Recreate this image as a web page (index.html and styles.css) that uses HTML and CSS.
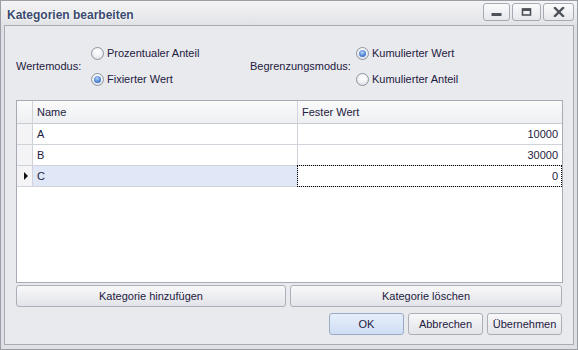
FILE: index.html
```html
<!DOCTYPE html>
<html lang="de">
<head>
<meta charset="utf-8">
<title>Kategorien bearbeiten</title>
<link rel="stylesheet" href="styles.css">
</head>
<body>
<div class="window">
  <div class="titlebar">
    <div class="title">Kategorien bearbeiten</div>
    <div class="wctrls">
      <div class="wbtn w-min"><svg width="11" height="9" viewBox="0 0 11 9"><rect x="0.5" y="5" width="10" height="3" fill="#4e5258"/></svg></div>
      <div class="wbtn w-max"><svg width="11" height="9" viewBox="0 0 11 9"><rect x="1.5" y="1" width="8" height="6" fill="none" stroke="#4e5258" stroke-width="1.6"/><rect x="1" y="0.5" width="9" height="2.5" fill="#4e5258"/></svg></div>
      <div class="wbtn w-close"><svg width="12" height="10" viewBox="0 0 12 10"><path d="M2 1 L10 9 M10 1 L2 9" stroke="#4e5258" stroke-width="2.4" stroke-linecap="square"/></svg></div>
    </div>
  </div>
  <div class="client">
    <div class="modes">
      <div class="group g1">
        <div class="glabel">Wertemodus:</div>
        <div class="radios">
          <div class="radio"><span class="rb"></span><span>Prozentualer Anteil</span></div>
          <div class="radio"><span class="rb on"></span><span>Fixierter Wert</span></div>
        </div>
      </div>
      <div class="group g2">
        <div class="glabel">Begrenzungsmodus:</div>
        <div class="radios">
          <div class="radio"><span class="rb on"></span><span>Kumulierter Wert</span></div>
          <div class="radio"><span class="rb"></span><span>Kumulierter Anteil</span></div>
        </div>
      </div>
    </div>
    <div class="grid">
      <div class="row head">
        <div class="c ind"></div>
        <div class="c name">Name</div>
        <div class="c val hv">Fester Wert</div>
      </div>
      <div class="row">
        <div class="c ind"></div>
        <div class="c name">A</div>
        <div class="c val">10000</div>
      </div>
      <div class="row">
        <div class="c ind"></div>
        <div class="c name">B</div>
        <div class="c val">30000</div>
      </div>
      <div class="row sel">
        <div class="c ind"><span class="arrow"></span></div>
        <div class="c name">C</div>
        <div class="c val focus">0</div>
      </div>
    </div>
    <div class="actions">
      <button class="btn add">Kategorie hinzufügen</button>
      <button class="btn del">Kategorie löschen</button>
    </div>
    <div class="footer">
      <button class="btn dlg ok">OK</button>
      <button class="btn dlg">Abbrechen</button>
      <button class="btn dlg">Übernehmen</button>
    </div>
  </div>
</div>
</body>
</html>
```
FILE: styles.css
```css
* { box-sizing: border-box; }
html, body { margin: 0; padding: 0; }
body {
  width: 578px;
  height: 350px;
  font-family: "Liberation Sans", Arial, sans-serif;
  font-size: 11px;
  color: #1d2040;
  overflow: hidden;
}
.window {
  width: 578px;
  height: 350px;
  border: 1px solid #9c9ea6;
  background: #dfe0e5;
  display: flex;
  flex-direction: column;
}
.titlebar {
  height: 24px;
  display: flex;
  align-items: flex-start;
  justify-content: space-between;
  padding: 0 3px 0 6px;
  background: linear-gradient(#f4f4f6, #e2e3e7);
}
.title {
  font-weight: bold;
  font-size: 12px;
  color: #3a4a6e;
  padding-top: 7px;
  text-shadow: 0 0 3px #fff, 0 0 2px #fff;
}
.wctrls {
  display: flex;
  gap: 2px;
  padding-top: 2px;
}
.wbtn {
  height: 18px;
  border: 1px solid #a7aab2;
  border-radius: 3px;
  background: linear-gradient(#fbfbfc, #e6e7eb);
  display: flex;
  align-items: center;
  justify-content: center;
}
.w-min { width: 27px; }
.w-max { width: 29px; }
.w-close { width: 31px; }
.client {
  margin: 0 3px 4px 3px;
  height: 320px;
  border: 1px solid #a9abb3;
  background: #e9eaee;
  padding: 0 10px 0 11px;
  display: flex;
  flex-direction: column;
}
.modes {
  height: 74px;
  display: flex;
  padding-top: 14px;
}
.group {
  display: flex;
  align-items: center;
  height: 52px;
}
.g1 { width: 234px; }
.g1 .glabel { width: 75px; }
.g2 .glabel { width: 106px; }
.radios {
  display: flex;
  flex-direction: column;
}
.radio {
  height: 26px;
  display: flex;
  align-items: center;
  gap: 3px;
}
.rb {
  width: 13px;
  height: 13px;
  border-radius: 50%;
  border: 1px solid #8e95a3;
  background: radial-gradient(circle at 50% 35%, #ffffff 0%, #f2f3f5 45%, #d3d6dc 100%);
  position: relative;
}
.rb.on::after {
  content: "";
  position: absolute;
  left: 2px; top: 2px;
  width: 7px; height: 7px;
  border-radius: 50%;
  background: radial-gradient(circle at 45% 35%, #b8d4fa 0%, #4f86d6 55%, #2a5cb0 100%);
}
.grid {
  height: 183px;
  border: 1px solid #a7abb4;
  background: #fff;
}
.row {
  display: flex;
  height: 21px;
}
.row.head { height: 23px; }
.c {
  border-right: 1px solid #d0d3da;
  border-bottom: 1px solid #d0d3da;
  display: flex;
  align-items: center;
  padding: 0 4px;
  white-space: nowrap;
}
.ind {
  width: 16px;
  background: #f4f4f6;
  padding: 0;
  justify-content: center;
}
.name { width: 265px; }
.val {
  flex: 1;
  border-right: none;
  justify-content: flex-end;
}
.val.hv { justify-content: flex-start; }
.head .c {
  background: linear-gradient(#fafafb, #eeeff2);
  border-bottom-color: #c8cbd2;
}
.sel .name { background: #e0e8f8; }
.focus { position: relative; }
.focus::after {
  content: "";
  position: absolute;
  left: -1px; top: -1px; right: 0; bottom: -1px;
  border: 1px dotted #000;
}
.arrow {
  width: 0; height: 0;
  border-top: 4px solid transparent;
  border-bottom: 4px solid transparent;
  border-left: 4px solid #111;
  margin-left: 2px;
}
.actions {
  display: flex;
  gap: 4px;
  margin-top: 2px;
}
.btn {
  font-family: "Liberation Sans", Arial, sans-serif;
  font-size: 11px;
  color: #1d2040;
  height: 22px;
  border: 1px solid #abafb8;
  border-radius: 3px;
  background: linear-gradient(#f8f8fa, #e3e4e9);
  padding: 0;
  margin: 0;
}
.add { width: 270px; }
.del { flex: 1; margin-right: 1px; }
.footer {
  display: flex;
  justify-content: flex-end;
  gap: 4px;
  margin-top: 6px;
  padding-right: 1px;
}
.dlg { width: 75px; }
.ok {
  border-color: #9aabc8;
  background: linear-gradient(#e6eefa, #cfdef4);
}
```
